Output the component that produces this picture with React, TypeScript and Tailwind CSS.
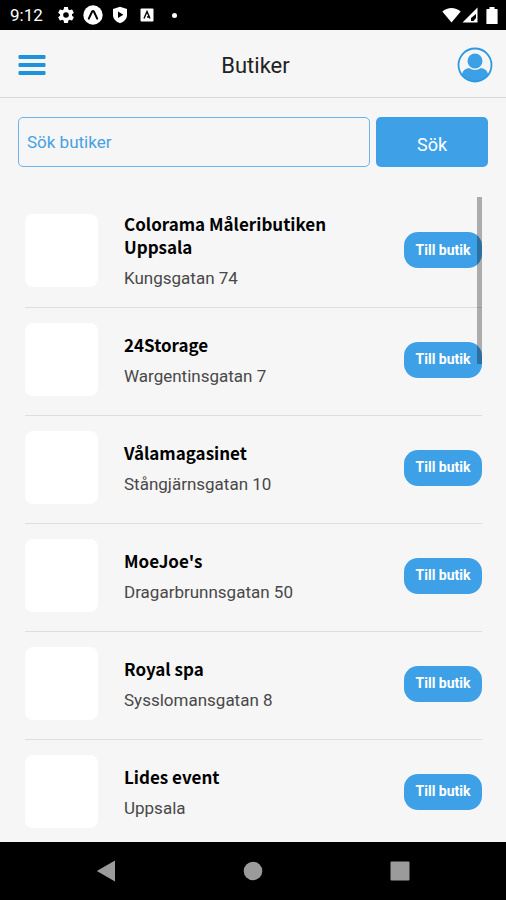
import { useState } from "react";

type Store = {
  name: string;
  address: string;
};

const stores: Store[] = [
  { name: "Colorama Måleributiken Uppsala", address: "Kungsgatan 74" },
  { name: "24Storage", address: "Wargentinsgatan 7" },
  { name: "Vålamagasinet", address: "Stångjärnsgatan 10" },
  { name: "MoeJoe's", address: "Dragarbrunnsgatan 50" },
  { name: "Royal spa", address: "Sysslomansgatan 8" },
  { name: "Lides event", address: "Uppsala" },
];

function StatusBar() {
  return (
    <div className="flex h-[30px] shrink-0 items-center justify-between bg-black pr-2 pl-[10px] text-white">
      <div className="flex items-center">
        <span className="w-12 text-[17px] leading-5">9:12</span>
        {/* Settings */}
        <svg className="h-4 w-4" viewBox="2 2 20 20" fill="currentColor">
          <path d="M19.43 12.98c.04-.32.07-.64.07-.98s-.03-.66-.07-.98l2.11-1.65c.19-.15.24-.42.12-.64l-2-3.46c-.12-.22-.39-.3-.61-.22l-2.49 1c-.52-.4-1.08-.73-1.69-.98l-.38-2.65C14.46 2.18 14.25 2 14 2h-4c-.25 0-.46.18-.49.42l-.38 2.65c-.61.25-1.17.59-1.69.98l-2.49-1c-.23-.09-.49 0-.61.22l-2 3.46c-.13.22-.07.49.12.64l2.11 1.65c-.04.32-.07.65-.07.98s.03.66.07.98l-2.11 1.65c-.19.15-.24.42-.12.64l2 3.46c.12.22.39.3.61.22l2.49-1c.52.4 1.08.73 1.69.98l.38 2.65c.03.24.24.42.49.42h4c.25 0 .46-.18.49-.42l.38-2.65c.61-.25 1.17-.59 1.69-.98l2.49 1c.23.09.49 0 .61-.22l2-3.46c.12-.22.07-.49-.12-.64l-2.11-1.65zM12 15.500a3.500 3.500 0 1 1 0-7 3.500 3.500 0 0 1 0 7z" />
        </svg>
        {/* Expo */}
        <svg className="ml-[9px] h-5 w-5" viewBox="0 0 20 20">
          <circle cx="10" cy="10" r="9.700" fill="white" />
          <path d="M5.800 13.600 9 6.800q1-1.500 2 0l3.200 6.800" fill="none" stroke="black" strokeWidth="2" strokeLinecap="round" />
        </svg>
        {/* Play protect */}
        <svg className="ml-[9px] h-[18px] w-4" viewBox="0 0 16 18">
          <path d="M8 .8 15 3v6c0 4-3 6.800-7 8.200C4 15.800 1 13 1 9V3z" fill="white" />
          <path d="M6 5.500v6.400l5.400-3.200z" fill="black" />
        </svg>
        <svg className="ml-3 h-[14px] w-[14px]" viewBox="0 0 14 14">
          <rect x=".5" y=".5" width="13" height="13" rx="1" fill="white" />
          <path d="M4 10.500 7 3.500l3 7M7 9h2.500" fill="none" stroke="black" strokeWidth="1.400" />
        </svg>
        <span className="ml-[18px] h-[5px] w-[5px] rounded-full bg-white" />
      </div>
      <div className="flex items-center">
        <svg className="h-4 w-[19px]" viewBox="0 0 19 16" fill="white">
          <path d="M9.500 15.500.3 4.500C5.500-.2 13.500-.2 18.700 4.500z" />
        </svg>
        <svg className="ml-px h-4 w-4" viewBox="0 0 16 16">
          <path d="M15.500.5v15H.5z" fill="white" />
          <path d="M14 7v7H9V11z" fill="black" />
          <path d="m11.500 14 2.500-3v3z" fill="white" />
        </svg>
        <svg className="ml-2 h-[17px] w-3" viewBox="0 0 12 17" fill="white">
          <path d="M3.500 0h5v2H11q.6 0 .6.600v13.800q0 .600-.6.600H1q-.6 0-.6-.600V2.600Q.4 2 1 2h2.500z" />
        </svg>
      </div>
    </div>
  );
}

function Header() {
  return (
    <header className="flex h-[68px] shrink-0 items-center justify-between border-b border-[#d8d8d8] pt-0.5 pr-[13px] pl-[18px]">
      <button type="button" aria-label="Meny" className="w-9">
        <svg className="h-[22px] w-7" viewBox="0 0 28 22" fill="#1c93db">
          <rect x=".5" y="1" width="27" height="4" rx="1" />
          <rect x=".5" y="9" width="27" height="4" rx="1" />
          <rect x=".5" y="17" width="27" height="4" rx="1" />
        </svg>
      </button>
      <h1 className="pt-0.5 text-[22px] leading-7 text-[#222]">Butiker</h1>
      <button type="button" aria-label="Profil" className="w-9">
        <svg className="h-9 w-9" viewBox="0 0 36 36">
          <defs>
            <clipPath id="profile-clip">
              <circle cx="18" cy="18" r="16.500" />
            </clipPath>
          </defs>
          <g clipPath="url(#profile-clip)" fill="#3ba0e6">
            <circle cx="18" cy="14" r="7.500" />
            <path d="M5 36V27q1-5 7-6 6 4 12 0 6 1 7 6v9z" />
          </g>
          <circle cx="18" cy="18" r="16.500" fill="none" stroke="#2b99e0" strokeWidth="1.800" />
        </svg>
      </button>
    </header>
  );
}

function StoreRow({ store }: { store: Store }) {
  return (
    <li className="flex items-center border-b border-[#dedede] pt-[15px] pb-[17px]">
      <div className="mb-0.5 h-[73px] w-[73px] shrink-0 rounded-lg bg-white" />
      <div className="ml-[26px] min-w-0 flex-1 pr-12">
        <h2 className="font-['Noto_Sans_CJK_SC',sans-serif] text-[17px] leading-[23px] font-bold text-black">
          {store.name}
        </h2>
        <p className="mt-2 text-[17px] leading-6 text-[#484848]">{store.address}</p>
      </div>
      <button
        type="button"
        className="mb-0.5 h-9 w-[78px] shrink-0 rounded-[14px] bg-[#3ea1e7] text-[14px] font-bold text-white"
      >
        Till butik
      </button>
    </li>
  );
}

export default function App() {
  const [query, setQuery] = useState("");
  const [filter, setFilter] = useState("");

  const visible = stores.filter((s) => s.name.toLowerCase().includes(filter.toLowerCase()));

  const handleSubmit = (e: React.FormEvent) => {
    e.preventDefault();
    setFilter(query.trim());
  };

  return (
    <div className="flex h-screen w-full flex-col bg-[#f6f6f6] font-[Roboto,sans-serif]">
      <StatusBar />
      <Header />

      {/* Search */}
      <form onSubmit={handleSubmit} className="flex shrink-0 gap-1.5 px-[18px] pt-[19px]">
        <input
          type="text"
          aria-label="Sök butiker"
          placeholder="Sök butiker"
          value={query}
          onChange={(e) => setQuery(e.target.value)}
          className="h-[50px] min-w-0 flex-1 rounded-[5px] border border-[#6cb3ea] bg-transparent px-2 text-[17px] text-[#222] outline-none placeholder:text-[#45a2e4]"
        />
        <button
          type="submit"
          className="h-[50px] w-28 rounded-[5px] bg-[#3ea1e7] pt-1 text-[18px] text-white"
        >
          Sök
        </button>
      </form>

      {/* Store list */}
      <main className="relative mt-[30px] mr-6 ml-[25px] min-h-0 flex-1">
        <ul className="h-full overflow-y-auto [scrollbar-width:none]">
          {visible.map((store) => (
            <StoreRow key={store.name} store={store} />
          ))}
        </ul>
        <div className="pointer-events-none absolute top-0 right-0 h-[167px] w-[5px] bg-black/30" />
      </main>

      {/* Android navigation */}
      <nav className="flex h-[58px] shrink-0 items-center justify-around bg-black px-8">
        <button type="button" aria-label="Tillbaka">
          <svg className="h-[22px] w-5" viewBox="0 0 20 22" fill="#9b9b9b">
            <path d="M19 .5v21L.8 11z" />
          </svg>
        </button>
        <button type="button" aria-label="Hem">
          <svg className="h-5 w-5" viewBox="0 0 20 20" fill="#9b9b9b">
            <circle cx="10" cy="10" r="9.300" />
          </svg>
        </button>
        <button type="button" aria-label="Översikt">
          <svg className="h-5 w-5" viewBox="0 0 20 20" fill="#9b9b9b">
            <rect x=".5" y=".5" width="19" height="19" rx="1" />
          </svg>
        </button>
      </nav>
    </div>
  );
}
